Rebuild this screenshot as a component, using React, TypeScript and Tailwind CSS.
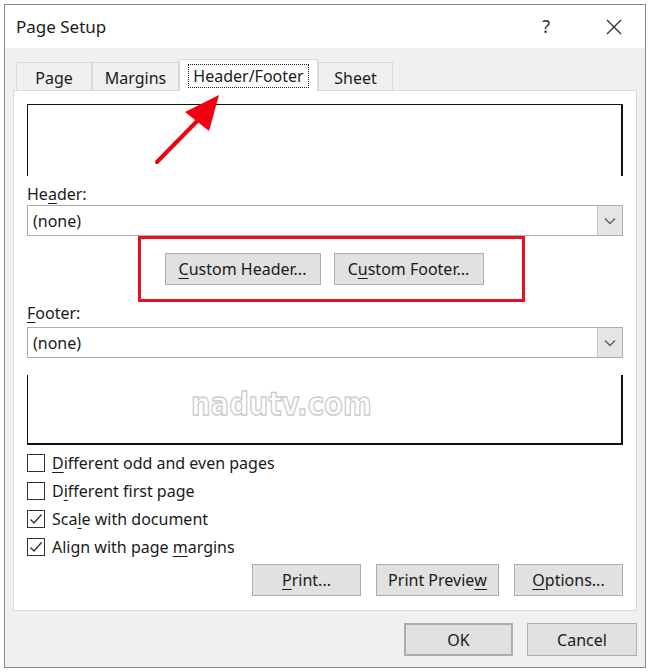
import React from 'react';

const font = { fontFamily: '"Noto Sans", "Open Sans", "Liberation Sans", sans-serif' };

function U({ children }: { children: React.ReactNode }) {
  return <span className="underline underline-offset-[3px] decoration-1">{children}</span>;
}

function Btn({ children, className = '' }: { children: React.ReactNode; className?: string }) {
  return (
    <div className={`flex h-[32px] items-center justify-center border border-[#adadad] bg-[#e1e1e1] text-[16px] text-[#1a1a1a] ${className}`}>
      {children}
    </div>
  );
}

function Chevron() {
  return (
    <svg width="12" height="8" viewBox="0 0 12 8" fill="none" stroke="#606060" strokeWidth="1.5">
      <path d="M1 1.5l5 5 5-5" />
    </svg>
  );
}

function Select() {
  return (
    <div className="flex h-[31px] items-stretch border border-[#adadad] bg-white">
      <div className="flex flex-1 items-center pl-[5px] text-[16px] text-[#1a1a1a]">(none)</div>
      <div className="flex w-[25px] items-center justify-center border-l border-[#c8c8c8] bg-[#e5e5e5]">
        <Chevron />
      </div>
    </div>
  );
}

function Check({ checked, children }: { checked?: boolean; children: React.ReactNode }) {
  return (
    <div className="flex h-[28px] items-center gap-[7px]">
      <div className="flex h-[18px] w-[18px] items-center justify-center border border-[#333] bg-white">
        {checked && (
          <svg width="14" height="12" viewBox="0 0 14 12" fill="none" stroke="#333" strokeWidth="1.4">
            <path d="M1.5 6.5l3.5 3.5 7.5-8.5" />
          </svg>
        )}
      </div>
      <span className="text-[16px] text-[#1a1a1a]">{children}</span>
    </div>
  );
}

export default function App() {
  const tabs = ['Page', 'Margins', 'Header/Footer', 'Sheet'];
  const widths = ['w-[76px]', 'w-[87px]', 'w-[139px]', 'w-[75px]'];
  return (
    <div className="h-[672px] w-[650px] overflow-hidden bg-white pl-[4px] pt-[4px]" style={font}>
      <div className="relative flex h-[664px] w-[642px] flex-col border border-[#888] bg-[#f0f0f0]">
        {/* title bar */}
        <div className="flex h-[43px] shrink-0 items-center bg-white pl-[11px]">
          <span className="text-[17px] text-[#1a1a1a]">Page Setup</span>
          <span className="ml-auto mr-[55px] text-[18px] text-[#333]">?</span>
          <svg className="mr-[22px]" width="18" height="18" viewBox="0 0 18 18" stroke="#333" strokeWidth="1.4">
            <path d="M2 2l14 14M16 2L2 16" />
          </svg>
        </div>

        {/* tabs */}
        <div className="ml-[11px] mt-[12px] flex h-[30px] items-end">
          {tabs.map((t, i) =>
            i === 2 ? (
              <div key={t} className={`relative z-10 -mb-px flex h-[32px] ${widths[i]} items-center justify-center border border-b-0 border-[#d9d9d9] bg-white`}>
                <span className="border border-dotted border-[#222] px-[4px] text-[16px] leading-[22px] text-[#1a1a1a]">{t}</span>
              </div>
            ) : (
              <div key={t} className={`flex h-[28px] ${widths[i]} items-center justify-center border border-b-0 border-[#d9d9d9] bg-[#f0f0f0] pt-[3px] text-[16px] text-[#1a1a1a]`}>
                {t}
              </div>
            )
          )}
        </div>

        {/* panel */}
        <div className="ml-[8px] flex h-[521px] w-[624px] flex-col border border-[#d9d9d9] bg-white px-[13px] pt-[13px]">
          <div className="h-[72px] shrink-0 border-l-[1.5px] border-r-2 border-t border-[#111]" />
          <div className="mt-[8px] h-[21px] text-[16px] leading-[20px] text-[#1a1a1a]">
            He<U>a</U>der:
          </div>
          <Select />
          <div className="flex justify-center">
            <div className="ml-[12px] flex gap-[13px] border-[3px] border-[#e8101e] py-[14px] pl-[24px] pr-[38px]">
              <Btn className="w-[156px]"><U>C</U>ustom Header...</Btn>
              <Btn className="w-[150px]">C<U>u</U>stom Footer...</Btn>
            </div>
          </div>
          <div className="h-[25px] pt-[1px] text-[16px] leading-[20px] text-[#1a1a1a]">
            <U>F</U>ooter:
          </div>
          <Select />
          <div className="mt-[17px] flex h-[70px] shrink-0 items-center border-b-2 border-l-[1.5px] border-r-2 border-[#111] pb-[10px] pl-[163px]">
            <span
              className="inline-block origin-left scale-x-[0.86] text-[32px] font-bold text-white"
              style={{
                fontFamily: '"DejaVu Sans", "Noto Sans", sans-serif',
                WebkitTextStroke: '1.5px #cdcdcd',
              }}
            >
              nadutv.com
            </span>
          </div>
          <div className="mt-[4px] flex flex-col">
            <Check><U>D</U>ifferent odd and even pages</Check>
            <Check>D<U>i</U>fferent first page</Check>
            <Check checked>Sca<U>l</U>e with document</Check>
            <Check checked>Align with page <U>m</U>argins</Check>
          </div>
          <div className="mt-[3px] flex justify-end gap-[15px]">
            <Btn className="h-[31px] w-[109px]"><U>P</U>rint...</Btn>
            <Btn className="h-[31px] w-[123px]">Print Previe<U>w</U></Btn>
            <Btn className="h-[31px] w-[109px]"><U>O</U>ptions...</Btn>
          </div>
        </div>

        {/* OK / Cancel */}
        <div className="mr-[8px] mt-[12px] flex justify-end gap-[14px]">
          <Btn className="h-[33px] w-[109px] border-2 border-[#0078d7]">OK</Btn>
          <Btn className="h-[33px] w-[110px]">Cancel</Btn>
        </div>

        {/* annotation arrow */}
        <svg className="pointer-events-none absolute left-0 top-0" width="642" height="664">
          <line x1="152" y1="157" x2="200" y2="108" stroke="#f00010" strokeWidth="4" strokeLinecap="round" />
          <polygon points="214,90 180,107 204,126" fill="#f00010" />
        </svg>
      </div>
    </div>
  );
}
